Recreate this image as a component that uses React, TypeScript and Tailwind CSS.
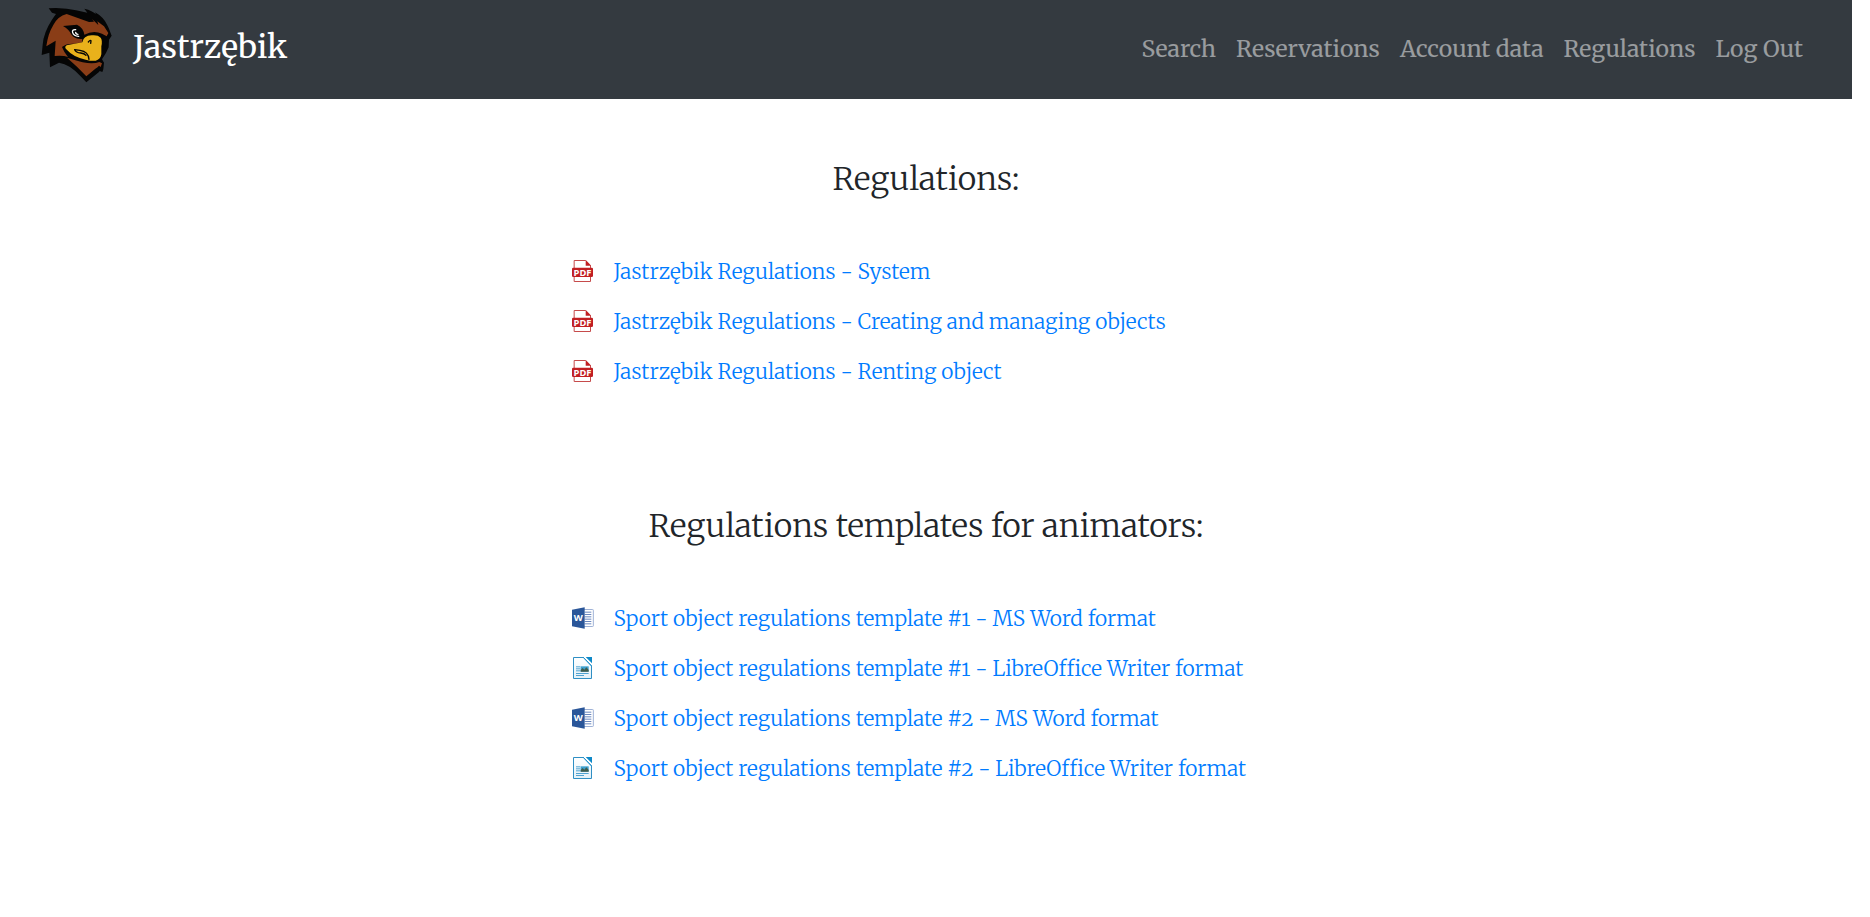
import type { ReactNode } from 'react';

const navLinks = ['Search', 'Reservations', 'Account data', 'Regulations', 'Log Out'];

type Kind = 'pdf' | 'word' | 'writer';

interface Doc {
  kind: Kind;
  label: string;
}

const regulations: Doc[] = [
  { kind: 'pdf', label: 'Jastrzębik Regulations - System' },
  { kind: 'pdf', label: 'Jastrzębik Regulations - Creating and managing objects' },
  { kind: 'pdf', label: 'Jastrzębik Regulations - Renting object' },
];

const templates: Doc[] = [
  { kind: 'word', label: 'Sport object regulations template #1 - MS Word format' },
  { kind: 'writer', label: 'Sport object regulations template #1 - LibreOffice Writer format' },
  { kind: 'word', label: 'Sport object regulations template #2 - MS Word format' },
  { kind: 'writer', label: 'Sport object regulations template #2 - LibreOffice Writer format' },
];

function HawkLogo() {
  return (
    <svg viewBox="33 21 216 228" className="h-[76px] w-[72px] shrink-0" aria-hidden="true">
      <path
        fill="#050505"
        d="M56 25 L78 24 Q112 25 138 31 L172 38 L163 26 Q188 32 198 43 L195 37 Q221 51 232 76 L236 84 L245 107 L237 119 L236 142 Q229 160 216 178 L222 188 L220 208 L217 216 L209 213 L207 216 L169 247 L151 228 Q120 193 87 188 L60 202 L58 158 L35 165 L38 134 Q41 98 65 61 Q72 50 78 42 L66 38 Z"
      />
      <path
        fill="#8a3d17"
        d="M110 42 Q83 49 70 75 Q54 101 49 139 L77 122 L74 168 Q100 166 114 171 Q102 157 96 141 Q108 130 132 131 L156 127 L157 117 Q136 119 125 105 Q117 88 99 78 L141 74 Q160 83 163 104 Q190 90 216 101 L230 109 L235 99 L222 79 L202 64 L205 75 L186 57 L192 65 L177 66 Z"
      />
      <path
        fill="#8a3d17"
        d="M111 173 Q143 182 158 187 Q190 193 208 186 L216 190 L212 201 L207 197 Q204 202 196 206 L169 229 Q145 202 111 173 Z"
      />
      <path
        fill="#e9b11b"
        d="M157 127 Q160 107 185 106 Q204 104 212 113 Q218 121 214 139 L214 163 Q211 179 197 182 L180 182 L167 179 Q130 172 109 148 Q102 141 110 136 Z"
      />
      <path
        fill="none"
        stroke="#050505"
        strokeWidth="4"
        strokeLinecap="round"
        strokeLinejoin="round"
        d="M175 126 Q180 119 183 122 L182 130 M134 149 L150 151 Q175 154 177 178 M134 149 Q138 158 152 159 Q163 160 168 166"
      />
      <path
        fill="none"
        stroke="#fff"
        strokeWidth="4"
        strokeLinecap="round"
        d="M137 89 Q125 88 128 98 Q131 108 146 109 M137 97 Q137 103 144 103"
      />
    </svg>
  );
}

function PdfIcon() {
  return (
    <svg viewBox="0 0 63 66" className="h-[22px] w-[21px]" aria-hidden="true">
      <path fill="#fff" stroke="#c64b4b" strokeWidth="3" d="M6.500 1.500 H41 L55.500 16 V64.500 H6.500 Z" />
      <path fill="#c11e22" d="M41 0 L57 17 H41 Z" />
      <rect y="23" width="63" height="28" rx="4" fill="#c11e22" />
      <text
        x="31.500"
        y="47"
        textAnchor="middle"
        fill="#fff"
        className="font-['Open_Sans',sans-serif] text-[28px] font-bold"
      >
        PDF
      </text>
    </svg>
  );
}

function WordIcon() {
  return (
    <svg viewBox="0 0 66 66" className="h-[22px] w-[22px]" aria-hidden="true">
      <rect x="34" y="7.500" width="30" height="51" rx="2" fill="#fff" stroke="#9fb2d6" strokeWidth="3" />
      <path stroke="#6b88bf" strokeWidth="3" d="M38 15.500 H58 M38 22.500 H58 M38 29.500 H58 M38 36.500 H58 M38 43.500 H58 M38 50.500 H58" />
      <path fill="#2a5699" d="M0 8 L38 1 V65 L0 58 Z" />
      <text
        x="18.500"
        y="43"
        textAnchor="middle"
        fill="#fff"
        className="font-['Open_Sans',sans-serif] text-[28px] font-bold"
      >
        W
      </text>
    </svg>
  );
}

function WriterIcon() {
  return (
    <svg viewBox="0 0 57 66" className="h-[22px] w-[19px]" aria-hidden="true">
      <defs>
        <linearGradient id="sheet" x1="0" y1="0" x2="0" y2="1">
          <stop offset="0" stopColor="#fff" />
          <stop offset="1" stopColor="#e4f1f8" />
        </linearGradient>
      </defs>
      <path fill="url(#sheet)" stroke="#2f8fc4" strokeWidth="3" d="M1.500 1.500 H31 L55.500 27 V64.500 H1.500 Z" />
      <path fill="#0d88c8" d="M38 0 H57 V19 Z" />
      <path stroke="#1c93d0" strokeWidth="3" d="M30 0 L57 28" />
      <path stroke="#4fa3d1" strokeWidth="3" d="M9 29.500 H22 M9 35.500 H22 M9 41.500 H22 M9 49.500 H47 M9 55.500 H33" />
      <rect x="23" y="28" width="24" height="16" fill="#3ba0cf" />
      <path fill="#3f5b4c" d="M23 44 V39 L29 33 L34 38 L40 31 L47 39 V44 Z" />
    </svg>
  );
}

const icons: Record<Kind, ReactNode> = {
  pdf: <PdfIcon />,
  word: <WordIcon />,
  writer: <WriterIcon />,
};

function DocSection({ title, docs }: { title: string; docs: Doc[] }) {
  return (
    <section>
      <h1 className="text-center text-[32px] leading-9 font-light text-[#212529]">{title}</h1>
      <ul className="mx-auto mt-[50px] max-w-[709px]">
        {docs.map((doc) => (
          <li key={doc.label} className="flex h-[50px] items-center gap-5">
            <span className="flex w-[22px] shrink-0 justify-center pb-0.5">{icons[doc.kind]}</span>
            <a href="#" className="text-[21px] leading-[30px] font-light text-[#007bff] hover:underline">
              {doc.label}
            </a>
          </li>
        ))}
      </ul>
    </section>
  );
}

export default function App() {
  return (
    <div className="mr-[18px] font-[Merriweather,'DejaVu_Serif_Condensed','DejaVu_Serif',serif] oldstyle-nums">
      <header className="flex h-[99px] items-start justify-between bg-[#343a40] pr-[49px] pl-[41px]">
        <a href="#" className="flex items-center gap-5 pt-[7px] text-[32px] leading-[48px] text-white">
          <HawkLogo />
          <span className="pt-1">Jastrzębik</span>
        </a>
        <nav className="flex gap-5 pt-[34px]">
          {navLinks.map((label) => (
            <a key={label} href="#" className="text-[23px] leading-[30px] text-white/50 hover:text-white/75">
              {label}
            </a>
          ))}
        </nav>
      </header>
      <main className="flex flex-col gap-[111px] px-4 pt-[62px] pb-16">
        <DocSection title="Regulations:" docs={regulations} />
        <DocSection title="Regulations templates for animators:" docs={templates} />
      </main>
    </div>
  );
}
